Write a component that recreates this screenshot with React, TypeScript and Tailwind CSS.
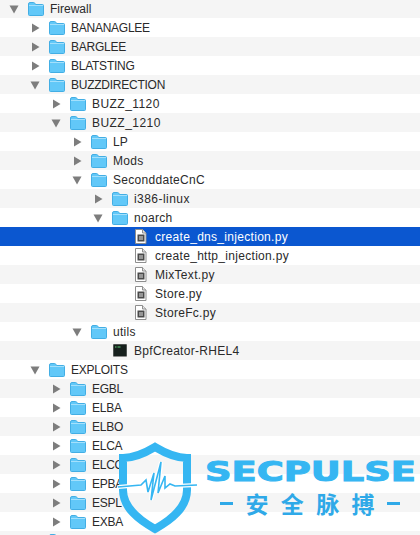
import React from 'react';

type Kind = 'closed' | 'open' | 'file' | 'selected' | 'terminal';
type Item = { name: string; level: number; kind: Kind; fit?: string };

// Liberation runs a little wide on capitals and narrow on lowercase compared to the original font
const caps = 'tracking-[-0.25px]';
const lower = 'tracking-[0.3px]';
const digits = 'tracking-[0.45px]';

const items: Item[] = [
  { name: 'Firewall', level: 0, kind: 'open' },
  { name: 'BANANAGLEE', level: 1, kind: 'closed', fit: caps },
  { name: 'BARGLEE', level: 1, kind: 'closed', fit: caps },
  { name: 'BLATSTING', level: 1, kind: 'closed', fit: caps },
  { name: 'BUZZDIRECTION', level: 1, kind: 'open', fit: caps },
  { name: 'BUZZ_1120', level: 2, kind: 'closed', fit: digits },
  { name: 'BUZZ_1210', level: 2, kind: 'open', fit: digits },
  { name: 'LP', level: 3, kind: 'closed' },
  { name: 'Mods', level: 3, kind: 'closed', fit: lower },
  { name: 'SeconddateCnC', level: 3, kind: 'open', fit: lower },
  { name: 'i386-linux', level: 4, kind: 'closed', fit: digits },
  { name: 'noarch', level: 4, kind: 'open', fit: lower },
  { name: 'create_dns_injection.py', level: 5, kind: 'selected', fit: lower },
  { name: 'create_http_injection.py', level: 5, kind: 'file', fit: lower },
  { name: 'MixText.py', level: 5, kind: 'file', fit: lower },
  { name: 'Store.py', level: 5, kind: 'file', fit: lower },
  { name: 'StoreFc.py', level: 5, kind: 'file', fit: lower },
  { name: 'utils', level: 3, kind: 'open', fit: lower },
  { name: 'BpfCreator-RHEL4', level: 3, kind: 'terminal', fit: lower },
  { name: 'EXPLOITS', level: 1, kind: 'open', fit: caps },
  { name: 'EGBL', level: 2, kind: 'closed', fit: caps },
  { name: 'ELBA', level: 2, kind: 'closed', fit: caps },
  { name: 'ELBO', level: 2, kind: 'closed', fit: caps },
  { name: 'ELCA', level: 2, kind: 'closed', fit: caps },
  { name: 'ELCO', level: 2, kind: 'closed', fit: caps },
  { name: 'EPBA', level: 2, kind: 'closed', fit: caps },
  { name: 'ESPL', level: 2, kind: 'closed', fit: caps },
  { name: 'EXBA', level: 2, kind: 'closed', fit: caps },
  { name: '', level: 1, kind: 'closed' },
];

const Folder = () => (
  <svg width="16" height="14" viewBox="0 0 16 14" className="shrink-0">
    <path d="M0.5 2 Q0.5 0.5 2 0.5 H5.5 Q6.5 0.5 7 1.5 L7.5 2.5 H14.5 Q15.5 2.5 15.5 3.5 V12.5 Q15.5 13.5 14.5 13.5 H1.5 Q0.5 13.5 0.5 12.5 Z" fill="#62c8f8" stroke="#43aee4" />
    <rect x="1" y="3" width="14" height="1" fill="#a4e0fc" />
  </svg>
);

const Arrow = ({ open }: { open: boolean }) => (
  <svg width="10" height="10" viewBox="0 0 10 10" className="shrink-0">
    {open ? <path d="M0.5 1.5 H9.5 L5 9.5 Z" fill="#7d7d7d" /> : <path d="M2 0.5 L9.5 5 L2 9.5 Z" fill="#7d7d7d" />}
  </svg>
);

const PyFile = () => (
  <svg width="12" height="15" viewBox="0 0 12 15" className="shrink-0">
    <path d="M0.5 0.5 H7.5 L11 4 V14.5 H0.5 Z" fill="#ffffff" stroke="#8e8e8e" />
    <path d="M7.5 0.5 V4 H11" fill="#e4e4e4" stroke="#8e8e8e" />
    <rect x="2.5" y="5.5" width="7" height="7" fill="#4a4a4a" />
    <rect x="4" y="7" width="4" height="4" fill="#969696" />
  </svg>
);

const TerminalIcon = () => (
  <svg width="14" height="13" viewBox="0 0 14 13" className="shrink-0">
    <rect x="0" y="0" width="14" height="13" rx="1" fill="#8a8a8a" />
    <rect x="0.5" y="0.5" width="13" height="11.5" fill="#17201d" />
    <rect x="2" y="2.5" width="1.5" height="1" fill="#5fd07a" />
    <rect x="4.5" y="2.5" width="3" height="1" fill="#5fd07a" />
  </svg>
);

const Row = ({ item, index }: { item: Item; index: number }) => {
  const selected = item.kind === 'selected';
  const stripe = selected ? 'bg-[#0b57d0]' : index % 2 === 0 ? 'bg-[#f5f5f5]' : 'bg-white';
  const isFolder = item.kind === 'open' || item.kind === 'closed';
  const isFile = item.kind === 'file' || item.kind === 'selected';
  const indent = [9, 30, 51, 72, 93, 135][item.level];

  return (
    <div className={`flex h-[19px] items-center ${stripe}`} style={{ paddingLeft: isFile ? 135 : indent }}>
      {isFolder && (
        <>
          <Arrow open={item.kind === 'open'} />
          <span className="ml-[9px]">
            <Folder />
          </span>
          <span className={`ml-[6px] text-[12px] text-[#2a2a2a] ${item.fit ?? ''}`}>{item.name}</span>
        </>
      )}
      {isFile && (
        <>
          <PyFile />
          <span className={`ml-[8px] text-[12px] ${selected ? 'text-white' : 'text-[#2a2a2a]'} ${item.fit ?? ''}`}>{item.name}</span>
        </>
      )}
      {item.kind === 'terminal' && (
        <>
          <span className="ml-[41px]">
            <TerminalIcon />
          </span>
          <span className={`ml-[7px] text-[12px] text-[#2a2a2a] ${item.fit ?? ''}`}>{item.name}</span>
        </>
      )}
    </div>
  );
};

const Watermark = () => (
  <>
    <svg width="85" height="95" viewBox="0 0 85 95" className="absolute left-[115px] top-[440px]">
      <path
        d="M40 7 C50 13 60 18 72 18 V50 C72 68 56 80 40 89 C24 80 8 68 8 50 V18 C20 18 30 13 40 7 Z"
        fill="none"
        stroke="#35b6f2"
        strokeWidth="8"
      />
      <path d="M3 47 L26 45 L31 40 L33 52 L39 33 L36 60 L46 22 L43 53 L50 36 L50 48 L55 44 L60 46 L82 45" fill="none" stroke="#ffffff" strokeWidth="4" />
      <path d="M3 47 L26 45 L31 40 L33 52 L39 33 L36 60 L46 22 L43 53 L50 36 L50 48 L55 44 L60 46 L82 45" fill="none" stroke="#35b6f2" strokeWidth="1.6" />
    </svg>
    <div className="absolute left-[205px] top-[456px] origin-left scale-x-[1.365] font-['DejaVu_Sans',sans-serif] text-[27px] leading-[32px] font-bold text-[#35b6f2] [-webkit-text-stroke:1px_#35b6f2]">
      SECPULSE
    </div>
    <div className="absolute left-[220px] top-[490px] flex w-[180px] items-center justify-between font-['Noto_Sans_CJK_SC',sans-serif] text-[23px] leading-[26px] font-bold text-[#2fa9e8]">
      <span className="h-[3px] w-[13px] bg-[#2fa9e8]" />
      <span>安</span>
      <span>全</span>
      <span>脉</span>
      <span>搏</span>
      <span className="h-[3px] w-[13px] bg-[#2fa9e8]" />
    </div>
  </>
);

export default function App() {
  return (
    <div className="relative h-[535px] w-[420px] overflow-hidden bg-white font-['Liberation_Sans',sans-serif]">
      <div className="-mt-px">
        {items.map((item, i) => (
          <Row key={i} item={item} index={i} />
        ))}
      </div>
      <Watermark />
    </div>
  );
}
